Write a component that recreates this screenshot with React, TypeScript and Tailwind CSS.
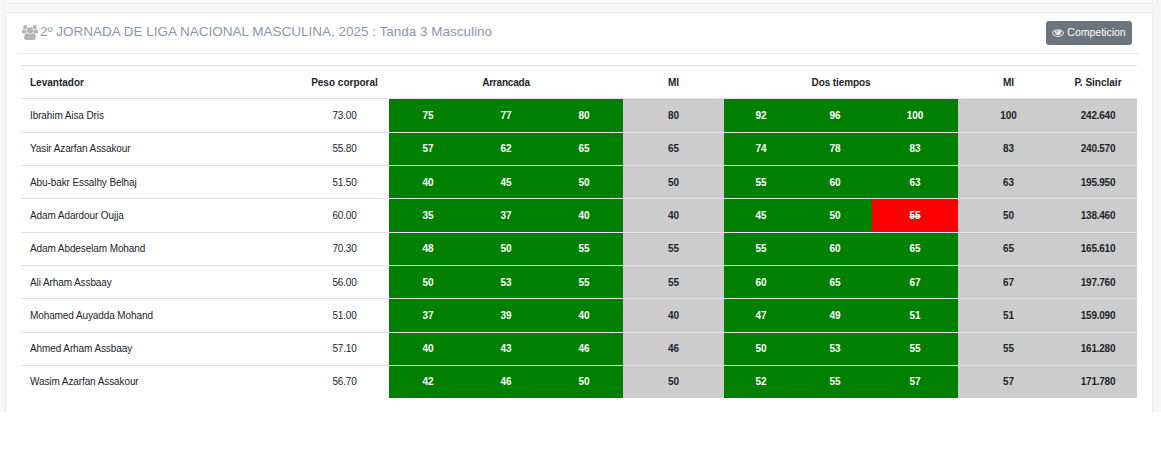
import React from "react";

type Row = { name: string; bw: string; sn: number[]; snMax: number; cj: number[]; cjMax: number; fail?: number; sinclair: string };

const rows: Row[] = [
  { name: "Ibrahim Aisa Dris", bw: "73.00", sn: [75, 77, 80], snMax: 80, cj: [92, 96, 100], cjMax: 100, sinclair: "242.640" },
  { name: "Yasir Azarfan Assakour", bw: "55.80", sn: [57, 62, 65], snMax: 65, cj: [74, 78, 83], cjMax: 83, sinclair: "240.570" },
  { name: "Abu-bakr Essalhy Belhaj", bw: "51.50", sn: [40, 45, 50], snMax: 50, cj: [55, 60, 63], cjMax: 63, sinclair: "195.950" },
  { name: "Adam Adardour Oujja", bw: "60.00", sn: [35, 37, 40], snMax: 40, cj: [45, 50, 55], cjMax: 50, fail: 2, sinclair: "138.460" },
  { name: "Adam Abdeselam Mohand", bw: "70.30", sn: [48, 50, 55], snMax: 55, cj: [55, 60, 65], cjMax: 65, sinclair: "165.610" },
  { name: "Ali Arham Assbaay", bw: "56.00", sn: [50, 53, 55], snMax: 55, cj: [60, 65, 67], cjMax: 67, sinclair: "197.760" },
  { name: "Mohamed Auyadda Mohand", bw: "51.00", sn: [37, 39, 40], snMax: 40, cj: [47, 49, 51], cjMax: 51, sinclair: "159.090" },
  { name: "Ahmed Arham Assbaay", bw: "57.10", sn: [40, 43, 46], snMax: 46, cj: [50, 53, 55], cjMax: 55, sinclair: "161.280" },
  { name: "Wasim Azarfan Assakour", bw: "56.70", sn: [42, 46, 50], snMax: 50, cj: [52, 55, 57], cjMax: 57, sinclair: "171.780" },
];

const Lift = ({ v, fail }: { v: number; fail?: boolean }) => (
  <td className={`border-t border-[#dee2e6] text-center font-bold text-white ${fail ? "bg-[#ff0000]" : "bg-[#008000]"}`}>
    {fail ? <s className="line-through decoration-1">{v}</s> : v}
  </td>
);

const Gray = ({ v, tight }: { v: React.ReactNode; tight?: boolean }) => (
  <td className={`border-t border-[#dee2e6] bg-[#cccccc] text-center font-bold text-[#212529] ${tight ? "tracking-[-0.25px]" : ""}`}>{v}</td>
);

const UsersIcon = () => (
  <svg viewBox="0 0 1920 1792" className="mr-[2px] h-[15px] w-[16px] fill-[#b4b4b4]">
    <path d="M593 896q-162 5-265 128H194q-82 0-138-40.500T0 865q0-353 124-353 6 0 43.500 21t97.500 42.500T384 597q67 0 133-23-5 37-5 66 0 139 81 256zm1071 637q0 120-73 189.500t-194 69.500H523q-121 0-194-69.500T256 1533q0-53 3.500-103.500t14-109T300 1212t43-97.500 62-81 85.500-53.500T602 960q10 0 43 21.500t73 48 107 48 135 21.500 135-21.500 107-48 73-48 43-21.500q61 0 111.500 20t85.500 53.500 62 81 43 97.500 26.500 108.500 14 109 3.500 103.500zM640 256q0 106-75 181t-181 75-181-75-75-181 75-181T384 0t181 75 75 181zm704 384q0 159-112.500 271.500T960 1024 688.500 911.500 576 640t112.500-271.500T960 256t271.500 112.500T1344 640zm576 225q0 78-56 118.500t-138 40.500h-134q-103-123-265-128 81-117 81-256 0-29-5-66 66 23 133 23 59 0 119-21.500t97.500-42.500 43.500-21q124 0 124 353zm-128-609q0 106-75 181t-181 75-181-75-75-181 75-181 181-75 181 75 75 181z" />
  </svg>
);

const EyeIcon = () => (
  <svg viewBox="0 384 1792 1152" className="h-[8px] w-[12px] fill-[#e6e6e6]">
    <path d="M1664 960q-152-236-381-353 61 104 61 225 0 185-131.500 316.500T896 1280t-316.500-131.500T448 832q0-121 61-225-229 117-381 353 133 205 333.500 326.500T896 1408t434.500-121.500T1664 960zM944 576q0-20-14-34t-34-14q-125 0-214.500 89.500T592 832q0 20 14 34t34 14 34-14 14-34q0-86 61-147t147-61q20 0 34-14t14-34zm848 384q0 34-20 69-140 230-376.500 368.500T896 1536t-499.500-139T20 1029q-20-35-20-69t20-69q140-229 376.500-368T896 384t499.500 139T1772 891q20 35 20 69z" />
  </svg>
);

export default function App() {
  return (
    <div className="h-[454px] w-[1161px] overflow-hidden bg-white font-['Liberation_Sans',Arial,sans-serif]">
      <div className="h-[412px] bg-[#f6f6f6] pl-[5px] pr-[8px]">
        <div className="h-[4px] rounded-b-[2px] border border-t-0 border-[#e9ecef] bg-white" />
        <div className="mt-[8px] h-[400px] border border-b-0 border-[#e9ecef] bg-white pl-[12px] pr-[13px]">
          <div className="flex h-[41px] items-center justify-between border-b border-[#e9ecef] pl-[4px] pr-[7px]">
            <h5 className="mb-[2px] flex items-center text-[13.5px] font-normal text-[#8898aa]">
              <UsersIcon />
              2º JORNADA DE LIGA NACIONAL MASCULINA, 2025 : Tanda 3 Masculino
            </h5>
            <button className="flex h-[24px] w-[86px] items-center justify-center gap-[3px] rounded-[3px] bg-[#6c757d] text-[10.5px] text-white">
              <EyeIcon />
              Competicion
            </button>
          </div>
          <div className="mt-[11px] px-[3px]">
            <table className="w-[1116px] table-fixed border-collapse border-t border-[#dee2e6] text-[10px] text-[#212529]">
              <colgroup>
                <col className="w-[279px]" />
                <col className="w-[89px]" />
                <col className="w-[78px]" />
                <col className="w-[78px]" />
                <col className="w-[78px]" />
                <col className="w-[101px]" />
                <col className="w-[74px]" />
                <col className="w-[74px]" />
                <col className="w-[86px]" />
                <col className="w-[101px]" />
                <col className="w-[78px]" />
              </colgroup>
              <thead>
                <tr className="h-[33.45px] font-bold text-[#212529]">
                  <th className="pl-[9px] text-left">Levantador</th>
                  <th className="text-center">Peso corporal</th>
                  <th colSpan={3} className="text-center tracking-[-0.2px]">Arrancada</th>
                  <th className="text-center">MI</th>
                  <th colSpan={3} className="text-center tracking-[-0.1px]">Dos tiempos</th>
                  <th className="text-center">MI</th>
                  <th className="text-center">P. Sinclair</th>
                </tr>
              </thead>
              <tbody>
                {rows.map((r, idx) => (
                  <tr key={r.name} className={idx === 8 ? "h-[32.7px]" : "h-[33.3px]"}>
                    <td className="border-t border-[#dee2e6] pl-[9px] tracking-[-0.1px]">{r.name}</td>
                    <td className="border-t border-[#dee2e6] text-center tracking-[-0.2px]">{r.bw}</td>
                    {r.sn.map((v, i) => <Lift key={i} v={v} />)}
                    <Gray v={r.snMax} />
                    {r.cj.map((v, i) => <Lift key={i} v={v} fail={r.fail === i} />)}
                    <Gray v={r.cjMax} />
                    <Gray v={r.sinclair} tight />
                  </tr>
                ))}
              </tbody>
            </table>
          </div>
        </div>
      </div>
    </div>
  );
}
